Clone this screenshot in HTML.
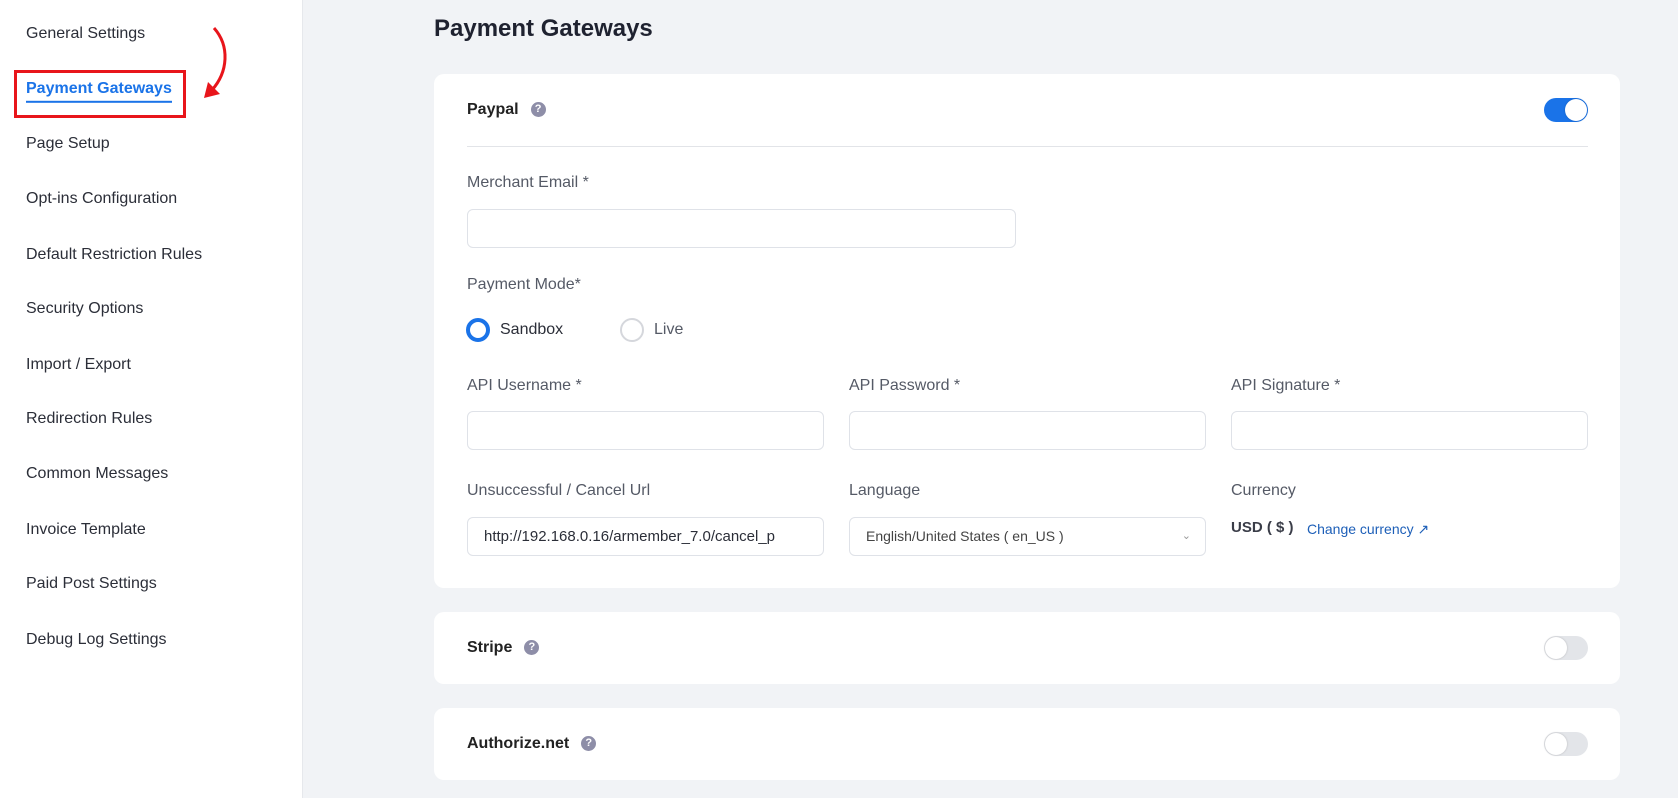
<!DOCTYPE html>
<html><head><meta charset="utf-8"><style>
*{box-sizing:border-box;margin:0;padding:0}
body{width:1678px;height:798px;overflow:hidden;background:#f1f3f6;font-family:"Liberation Sans",sans-serif;position:relative;color:#2b2e38}
.sb{position:absolute;left:0;top:0;width:303px;height:798px;background:#fff;border-right:1px solid #e6e8ec}
.si{position:absolute;left:26px;font-size:16px;color:#2b2e38;transform:translateY(-50%)}
.a{position:absolute;white-space:nowrap}
.card{position:absolute;left:434px;width:1186px;background:#fff;border-radius:10px}
.lbl{position:absolute;font-size:16px;color:#555a66;transform:translateY(-50%)}
.inp{position:absolute;height:39px;border:1px solid #dfe2e8;border-radius:6px;background:#fff}
.q{display:inline-block;width:15px;height:15px;border-radius:50%;background:#8e8ea8;color:#fff;font-size:11px;font-weight:bold;text-align:center;line-height:15px;vertical-align:2px;margin-left:12px}
.tg{position:absolute;width:44px;height:24px;border-radius:12px;background:#e3e5e9}
.tg i{position:absolute;left:1px;top:1px;width:22px;height:22px;border-radius:50%;background:#fff;box-shadow:0 0 2px rgba(0,0,0,.2)}
.h{position:absolute;font-size:16px;font-weight:bold;color:#222;transform:translateY(-50%)}
</style></head><body>
<div class="sb">
<div class="si" style="top:34px">General Settings</div>
<div class="si" style="top:89px;color:#1a73e8;font-weight:bold;border-bottom:2px solid #1a73e8;padding-bottom:3px;transform:translateY(-40%)">Payment Gateways</div>
<div style="position:absolute;left:14px;top:70px;width:172px;height:48px;border:3px solid #e8151b"></div>
<svg style="position:absolute;left:200px;top:24px" width="40" height="80" viewBox="0 0 40 80"><path d="M14 4 C30 22 28 48 12 66" fill="none" stroke="#e8151b" stroke-width="3"/><path d="M4 74 L20 70 L8 58 Z" fill="#e8151b"/></svg>
<div class="si" style="top:144px">Page Setup</div>
<div class="si" style="top:199px">Opt-ins Configuration</div>
<div class="si" style="top:255px">Default Restriction Rules</div>
<div class="si" style="top:309px">Security Options</div>
<div class="si" style="top:365px">Import / Export</div>
<div class="si" style="top:419px">Redirection Rules</div>
<div class="si" style="top:474px">Common Messages</div>
<div class="si" style="top:530px">Invoice Template</div>
<div class="si" style="top:584px">Paid Post Settings</div>
<div class="si" style="top:640px">Debug Log Settings</div>
</div>
<div class="a" style="left:434px;top:15px;font-size:24px;font-weight:bold;color:#1f2230">Payment Gateways</div>

<div class="card" style="top:74px;height:514px"></div>
<div class="h" style="left:467px;top:110px">Paypal<span class="q">?</span></div>
<div class="tg" style="left:1544px;top:98px;background:#1a73e8"><i style="left:21px"></i></div>
<div class="a" style="left:467px;top:146px;width:1121px;height:1px;background:#e2e4e8"></div>
<div class="lbl" style="left:467px;top:183px">Merchant Email *</div>
<div class="inp" style="left:467px;top:209px;width:549px"></div>
<div class="lbl" style="left:467px;top:285px">Payment Mode*</div>
<div class="a" style="left:466px;top:318px;width:24px;height:24px;border-radius:50%;border:4px solid #1a73e8"></div>
<div class="lbl" style="left:500px;top:330px;color:#2b2e38">Sandbox</div>
<div class="a" style="left:620px;top:318px;width:24px;height:24px;border-radius:50%;border:2px solid #d5d7dc"></div>
<div class="lbl" style="left:654px;top:330px">Live</div>
<div class="lbl" style="left:467px;top:386px">API Username *</div>
<div class="lbl" style="left:849px;top:386px">API Password *</div>
<div class="lbl" style="left:1231px;top:386px">API Signature *</div>
<div class="inp" style="left:467px;top:411px;width:357px"></div>
<div class="inp" style="left:849px;top:411px;width:357px"></div>
<div class="inp" style="left:1231px;top:411px;width:357px"></div>
<div class="lbl" style="left:467px;top:491px">Unsuccessful / Cancel Url</div>
<div class="lbl" style="left:849px;top:491px">Language</div>
<div class="lbl" style="left:1231px;top:491px">Currency</div>
<div class="inp" style="left:467px;top:517px;width:357px;overflow:hidden;padding:0 12px 0 16px;line-height:37px;font-size:15px;color:#2b2e38;white-space:nowrap">http://192.168.0.16/armember_7.0/cancel_p</div>
<div class="inp" style="left:849px;top:517px;width:357px;padding-left:16px;line-height:37px;font-size:14px;color:#444">English/United States ( en_US )<span style="position:absolute;right:14px;top:0;color:#999;font-size:11px">&#8964;</span></div>
<div class="a" style="left:1231px;top:519px;font-size:15px;font-weight:bold;color:#3a3d48">USD ( $ )</div>
<div class="a" style="left:1307px;top:521px;font-size:14px;color:#1d5fb8">Change currency &#8599;</div>

<div class="card" style="top:612px;height:72px"></div>
<div class="h" style="left:467px;top:648px">Stripe<span class="q">?</span></div>
<div class="tg" style="left:1544px;top:636px"><i></i></div>
<div class="card" style="top:708px;height:72px"></div>
<div class="h" style="left:467px;top:744px">Authorize.net<span class="q">?</span></div>
<div class="tg" style="left:1544px;top:732px"><i></i></div>
</body></html>
